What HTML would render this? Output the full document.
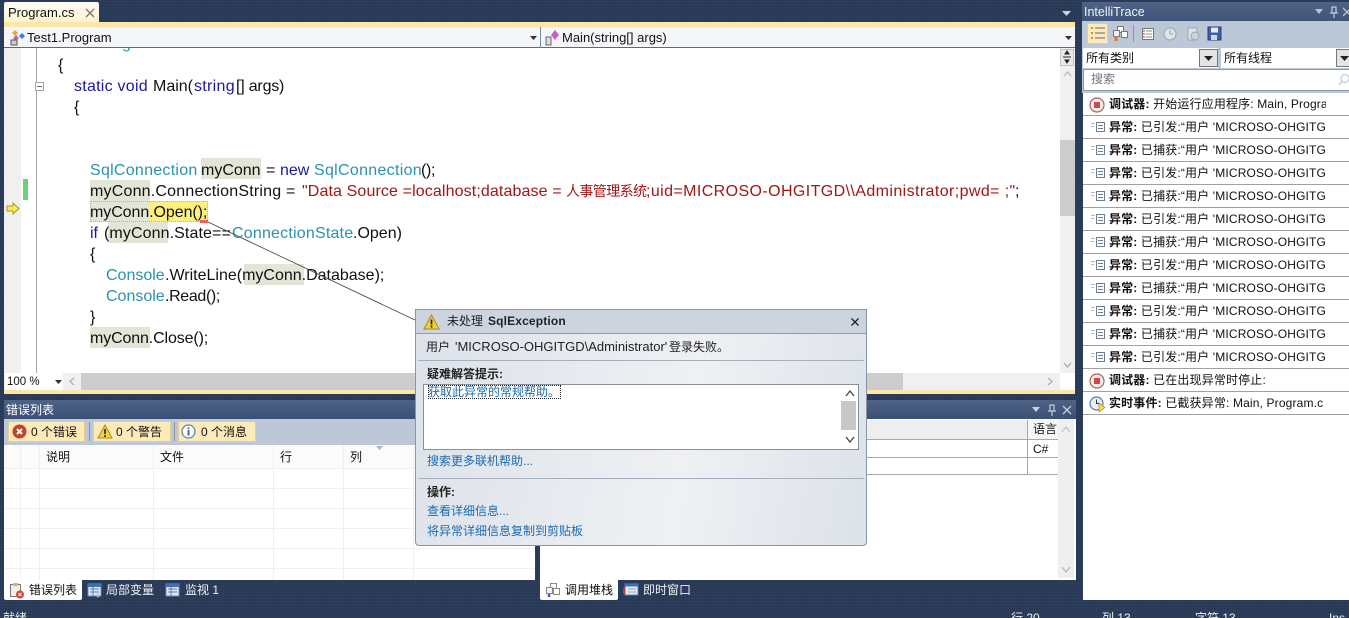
<!DOCTYPE html>
<html><head><meta charset="utf-8">
<style>
html,body{margin:0;padding:0;width:1349px;height:618px;overflow:hidden}
body{position:relative;background:#293955;font-family:"Liberation Sans","Noto Sans CJK SC",sans-serif;font-size:12px;color:#111}
div,svg{position:absolute}
#root{left:0;top:0;width:1349px;height:618px;overflow:hidden;background:#293955}
.t{white-space:nowrap;line-height:16px}
.c{font-size:16px;line-height:21px;white-space:nowrap;position:absolute;color:#111}
.k{color:#1a1a9c}.y{color:#2b91af}.s{color:#a31515}
.h{background:#e2e6d6;height:21px}
.dot{background-image:radial-gradient(#2f4160 40%,transparent 45%);background-size:3px 3px}
.r{left:1083px;width:266px;height:22px;border-bottom:1px solid #a0a0a0;background:#fff}
.r b{font-weight:bold}
.r .t{left:26px;top:3px;width:217px;overflow:hidden;letter-spacing:.15px}
.l{color:#1c6cb0}
</style></head><body>
<div id="root">
<div class="dot" style="left:0;top:0;width:1349px;height:618px"></div>

<!-- tab -->
<div style="left:4px;top:2px;width:95px;height:20px;background:linear-gradient(#fdfdf8,#fff3cd);border-radius:2px 2px 0 0"></div>
<div class="t" style="left:8px;top:5px;font-size:13px">Program.cs</div>
<svg style="left:84px;top:7px" width="12" height="12" viewBox="0 0 12 12"><path d="M2 2l8 8M10 2l-8 8" stroke="#777" stroke-width="1.4"/></svg>
<svg style="left:1062px;top:11px" width="10" height="6"><path d="M0 0h9L4.500 5z" fill="#ced4df"/></svg>
<div style="left:4px;top:22px;width:1071px;height:5px;background:#fde6a8"></div>

<!-- nav bar -->
<div style="left:4px;top:27px;width:1071px;height:21px;background:#f4f6fa"></div>
<div style="left:4px;top:47px;width:1071px;height:1px;background:#5b6a80"></div>
<div style="left:540px;top:27px;width:1px;height:21px;background:#7d8ba0"></div>
<svg style="left:9px;top:29px" width="17" height="17" viewBox="0 0 17 17"><path d="M6 1l3 3-3 3-3-3z" fill="#e0a93a"/><path d="M13 4l3 3-3 3-3-3z" fill="#3d7fd0"/><path d="M7 6l3 3-3 3-3-3z" fill="#c460c8"/><rect x="2" y="11" width="6" height="5" fill="#ccc" stroke="#555"/></svg>
<div class="t" style="left:27px;top:30px;font-size:13px">Test1.Program</div>
<svg style="left:530px;top:36px" width="8" height="4"><path d="M0 0h7L3.500 4z" fill="#333"/></svg>
<svg style="left:544px;top:29px" width="18" height="17" viewBox="0 0 18 17"><rect x="2" y="8" width="5" height="8" fill="#ddd" stroke="#667"/><path d="M11 1l4 5-4 5-4-5z" fill="#c75fd0"/></svg>
<div class="t" style="left:562px;top:30px;font-size:13px">Main(string[] args)</div>
<svg style="left:1065px;top:36px" width="8" height="4"><path d="M0 0h7L3.500 4z" fill="#333"/></svg>

<!-- editor -->
<div style="left:4px;top:48px;width:1071px;height:325px;background:#fff;overflow:hidden">
  <div style="left:0;top:0;width:17px;height:325px;background:#f0f0f0"></div>
  <div style="left:32px;top:0;width:1px;height:325px;background:#a5a5a5"></div>
  <div style="left:31px;top:34px;width:7px;height:7px;border:1px solid #a5a5a5;background:#fff"></div>
  <div style="left:33px;top:38px;width:5px;height:1px;background:#666"></div>
  <div style="left:19px;top:131px;width:5px;height:21px;background:#6cd275"></div>
  <div class="c y" style="left:118px;top:-15px">g</div>
</div>
<svg style="left:6px;top:202px" width="14" height="13" viewBox="0 0 14 13"><path d="M1 4h6V1l6 5.500-6 5.500V9H1z" fill="#f5ec5a" stroke="#a89a20"/></svg>

<div class="h" style="left:201px;top:158px;width:60px"></div>
<div class="h" style="left:90px;top:180px;width:60px"></div>
<div class="h" style="left:90px;top:201px;width:60px"></div>
<div style="left:150px;top:201px;width:58px;height:21px;background:#ffef7f"></div>
<div style="left:90px;top:201px;width:118px;height:21px;box-sizing:border-box;border:1px dotted #b9b48c"></div>
<div class="h" style="left:108px;top:222px;width:60px"></div>
<div class="h" style="left:244px;top:264px;width:60px"></div>
<div class="h" style="left:90px;top:327px;width:60px"></div>
<div style="left:200px;top:220px;width:8px;height:3px;background:#f0605a"></div>

<span class="c" style="left:58px;top:55px">{</span>
<span class="c k" style="left:74px;top:76px;letter-spacing:.25px">static void</span>
<span class="c" style="left:153px;top:76px">Main(</span>
<span class="c k" style="left:194px;top:76px;letter-spacing:.3px">string</span>
<span class="c" style="left:236px;top:76px;letter-spacing:-.2px">[] args)</span>
<span class="c" style="left:74px;top:97px">{</span>

<span class="c y" style="left:90px;top:160px;letter-spacing:.27px">SqlConnection</span>
<span class="c" style="left:201px;top:160px">myConn</span>
<span class="c" style="left:266px;top:160px">=</span>
<span class="c k" style="left:280px;top:160px">new</span>
<span class="c y" style="left:314px;top:160px;letter-spacing:.3px">SqlConnection</span>
<span class="c" style="left:421px;top:160px;letter-spacing:-.3px">();</span>

<span class="c" style="left:90px;top:181px;letter-spacing:.2px">myConn.ConnectionString =</span>
<span class="c s" style="left:302px;top:181px;letter-spacing:.12px">"Data Source =localhost;database =</span>
<span class="c s" style="left:566px;top:181px;font-size:14px;letter-spacing:-.6px">人事管理系统</span>
<span class="c s" style="left:646px;top:181px;letter-spacing:.4px">;uid=MICROSO-OHGITGD\\Administrator;pwd= ;"</span>
<span class="c" style="left:1015px;top:181px">;</span>

<span class="c" style="left:90px;top:202px;letter-spacing:-.07px">myConn.Open();</span>
<span class="c k" style="left:90px;top:223px">if</span>
<span class="c" style="left:104px;top:223px;letter-spacing:.1px">(myConn.State==</span>
<span class="c y" style="left:232px;top:223px;letter-spacing:.2px">ConnectionState</span>
<span class="c" style="left:353px;top:223px">.Open)</span>
<span class="c" style="left:90px;top:244px">{</span>
<span class="c y" style="left:106px;top:265px">Console</span>
<span class="c" style="left:165px;top:265px">.WriteLine(myConn.Database);</span>
<span class="c y" style="left:106px;top:286px">Console</span>
<span class="c" style="left:165px;top:286px;letter-spacing:-.35px">.Read();</span>
<span class="c" style="left:90px;top:307px">}</span>
<span class="c" style="left:90px;top:328px;letter-spacing:-.13px">myConn.Close();</span>

<svg style="left:205px;top:220px" width="215" height="104"><path d="M3 2L210 100" stroke="#444" stroke-width=".8" fill="none"/></svg>

<!-- editor scrollbars -->
<div style="left:1060px;top:48px;width:15px;height:325px;background:#f0f0f0"></div>
<div style="left:1060px;top:49px;width:14px;height:17px;background:#e8e8e8;border:1px solid #c4c4c4;box-sizing:border-box"></div>
<svg style="left:1062px;top:50px" width="10" height="14"><path d="M1 7h8M5 1L3 4h4zM5 13l-2-3h4z" stroke="#222" fill="#222"/></svg>
<svg style="left:1063px;top:71px" width="9" height="6"><path d="M1 5l3.500-4L8 5" stroke="#c0c0c0" fill="none" stroke-width="1.400"/></svg>
<div style="left:1060px;top:140px;width:15px;height:76px;background:#cdcdcd"></div>
<svg style="left:1063px;top:362px" width="9" height="6"><path d="M1 1l3.500 4L8 1" stroke="#b0b0b0" fill="none" stroke-width="1.400"/></svg>

<div style="left:4px;top:373px;width:1071px;height:17px;background:#f0f0f0"></div>
<div style="left:5px;top:373px;width:58px;height:17px;background:#fff"></div>
<div class="t" style="left:7px;top:374px;font-size:11.500px">100 %</div>
<svg style="left:55px;top:380px" width="7" height="4"><path d="M0 0h7L3.500 4z" fill="#333"/></svg>
<svg style="left:69px;top:377px" width="6" height="9"><path d="M5 1L1 4.500 5 8" stroke="#b0b0b0" fill="none" stroke-width="1.300"/></svg>
<div style="left:81px;top:373px;width:822px;height:17px;background:#cdcdcd"></div>
<svg style="left:1047px;top:377px" width="6" height="9"><path d="M1 1l4 3.500L1 8" stroke="#b0b0b0" fill="none" stroke-width="1.300"/></svg>
<div style="left:1060px;top:373px;width:15px;height:17px;background:#fff"></div>
<div style="left:4px;top:390px;width:1071px;height:4px;background:#fde6a8"></div>

<!-- error list panel -->
<div style="left:4px;top:400px;width:531px;height:19px;background:linear-gradient(#4f6386,#3b5076)"></div>
<div class="t" style="left:6px;top:402px;font-size:12px;color:#fff">错误列表</div>
<div style="left:4px;top:419px;width:531px;height:26px;background:#bcc7d8"></div>
<div style="left:8px;top:421px;width:77px;height:21px;background:#fdeab9;border:1px solid #e8cf8f;box-sizing:border-box"></div>
<div style="left:93px;top:421px;width:78px;height:21px;background:#fdeab9;border:1px solid #e8cf8f;box-sizing:border-box"></div>
<div style="left:178px;top:421px;width:78px;height:21px;background:#fdeab9;border:1px solid #e8cf8f;box-sizing:border-box"></div>
<div style="left:89px;top:422px;width:1px;height:19px;background:#8996ab"></div>
<div style="left:174px;top:422px;width:1px;height:19px;background:#8996ab"></div>
<svg style="left:12px;top:424px" width="15" height="15" viewBox="0 0 15 15"><circle cx="7.500" cy="7.500" r="7" fill="#c0432c"/><path d="M5 5l5 5M10 5l-5 5" stroke="#fff" stroke-width="2"/></svg>
<svg style="left:97px;top:424px" width="16" height="15" viewBox="0 0 16 15"><path d="M8 1l7 13H1z" fill="#f3d33c" stroke="#a98a1c"/><path d="M8 5v5M8 11v2" stroke="#222" stroke-width="1.600"/></svg>
<svg style="left:181px;top:424px" width="15" height="15" viewBox="0 0 15 15"><circle cx="7.500" cy="7.500" r="6.500" fill="#fff" stroke="#5f87b8" stroke-width="1.300"/><path d="M7.500 6v5.500M7.500 3.500v1.500" stroke="#2e5c9c" stroke-width="1.800"/></svg>
<div class="t" style="left:31px;top:424px">0 个错误</div>
<div class="t" style="left:116px;top:424px">0 个警告</div>
<div class="t" style="left:201px;top:424px">0 个消息</div>

<div style="left:4px;top:445px;width:531px;height:135px;background:#fff"></div>
<div style="left:4px;top:445px;width:531px;height:23px;background:#fbfbfb"></div>
<div style="left:4px;top:468px;width:531px;height:1px;background:#f0f0f0"></div>
<div style="left:4px;top:488px;width:531px;height:1px;background:#f0f0f0"></div>
<div style="left:4px;top:508px;width:531px;height:1px;background:#f0f0f0"></div>
<div style="left:4px;top:528px;width:531px;height:1px;background:#f0f0f0"></div>
<div style="left:4px;top:548px;width:531px;height:1px;background:#f0f0f0"></div>
<div style="left:4px;top:568px;width:531px;height:1px;background:#f0f0f0"></div>
<div style="left:20px;top:445px;width:1px;height:135px;background:#f0f0f0"></div>
<div style="left:39px;top:445px;width:1px;height:135px;background:#f0f0f0"></div>
<div style="left:153px;top:445px;width:1px;height:135px;background:#f0f0f0"></div>
<div style="left:273px;top:445px;width:1px;height:135px;background:#f0f0f0"></div>
<div style="left:343px;top:445px;width:1px;height:135px;background:#f0f0f0"></div>
<div style="left:413px;top:445px;width:1px;height:135px;background:#f0f0f0"></div>
<div class="t" style="left:46px;top:449px">说明</div>
<div class="t" style="left:160px;top:449px">文件</div>
<div class="t" style="left:280px;top:449px">行</div>
<div class="t" style="left:350px;top:449px">列</div>
<svg style="left:376px;top:446px" width="8" height="4"><path d="M0 0h7L3.500 4z" fill="#9fb8c8"/></svg>

<!-- bottom tabs left -->
<div style="left:4px;top:580px;width:78px;height:20px;background:#fff;border-radius:0 0 2px 2px"></div>
<svg style="left:9px;top:582px" width="16" height="17" viewBox="0 0 16 17"><rect x="1.500" y="2.500" width="10" height="12" fill="#f2efe4" stroke="#777"/><rect x="4" y="1" width="5" height="3" fill="#c9b878"/><circle cx="11" cy="12.500" r="4" fill="#d04a3a"/><path d="M9.500 11l3 3M12.500 11l-3 3" stroke="#fff"/></svg>
<div class="t" style="left:29px;top:582px">错误列表</div>
<svg style="left:87px;top:583px" width="15" height="15" viewBox="0 0 15 15"><rect x="1" y="1" width="13" height="12" fill="#dfe7f3" stroke="#6c8ab5"/><rect x="1" y="1" width="13" height="3" fill="#3f6fb5"/><path d="M3 6h9M3 9h9M6 4v9" stroke="#5f7da8"/><path d="M10 10l3 3-3 2z" fill="#d2a6d8"/></svg>
<div class="t" style="left:106px;top:582px;color:#eef1f6">局部变量</div>
<svg style="left:165px;top:583px" width="15" height="15" viewBox="0 0 15 15"><rect x="1" y="1" width="13" height="12" fill="#dfe7f3" stroke="#6c8ab5"/><rect x="1" y="1" width="13" height="3" fill="#3f6fb5"/><path d="M3 6h9M3 9h9M6 4v9" stroke="#5f7da8"/></svg>
<div class="t" style="left:185px;top:582px;color:#eef1f6">监视 1</div>

<!-- call stack panel -->
<div style="left:540px;top:400px;width:536px;height:19px;background:linear-gradient(#4f6386,#3b5076)"></div>
<svg style="left:1032px;top:407px" width="9" height="5"><path d="M0 0h8L4 5z" fill="#ccd4e0"/></svg>
<svg style="left:1047px;top:404px" width="10" height="12"><path d="M3 1h4v6H3zM1 7h8M5 7v5" stroke="#dde3ec" fill="none"/></svg>
<svg style="left:1062px;top:405px" width="10" height="10"><path d="M1 1l8 8M9 1L1 9" stroke="#c4ccd9" stroke-width="1.300"/></svg>
<div style="left:540px;top:419px;width:536px;height:161px;background:#fff"></div>
<div style="left:540px;top:420px;width:488px;height:19px;background:#efefef"></div>
<div style="left:1028px;top:420px;width:30px;height:19px;background:#f6f6f6"></div>
<div style="left:540px;top:439px;width:518px;height:1px;background:#a8a8a8"></div>
<div style="left:540px;top:457px;width:518px;height:1px;background:#a8a8a8"></div>
<div style="left:540px;top:474px;width:518px;height:1px;background:#a8a8a8"></div>
<div style="left:1027px;top:420px;width:1px;height:54px;background:#a8a8a8"></div>
<div class="t" style="left:1033px;top:421px">语言</div>
<div class="t" style="left:1033px;top:441px">C#</div>
<div style="left:1058px;top:419px;width:16px;height:159px;background:#efefef"></div>
<svg style="left:1061px;top:426px" width="10" height="7"><path d="M1 6l4-5 4 5" stroke="#c4c4c4" fill="none" stroke-width="1.300"/></svg>
<svg style="left:1061px;top:566px" width="10" height="7"><path d="M1 1l4 5 4-5" stroke="#b8b8b8" fill="none" stroke-width="1.300"/></svg>

<div style="left:540px;top:580px;width:78px;height:20px;background:#fff;border-radius:0 0 2px 2px"></div>
<svg style="left:545px;top:582px" width="16" height="16" viewBox="0 0 16 16"><rect x="5.500" y="1.500" width="6" height="6" fill="#fff" stroke="#888"/><rect x="1.500" y="5.500" width="6" height="6" fill="#eef" stroke="#888"/><rect x="8.500" y="6.500" width="6" height="6" fill="#fff" stroke="#888"/><path d="M4 12v3" stroke="#2b66b8" stroke-width="2.500"/></svg>
<div class="t" style="left:565px;top:582px">调用堆栈</div>
<svg style="left:623px;top:583px" width="16" height="15" viewBox="0 0 16 15"><rect x="2" y="1" width="13" height="11" fill="#e6edf7" stroke="#5a7fb5"/><rect x="2" y="1" width="13" height="2.500" fill="#3f6fb5"/><path d="M1 5v6" stroke="#c8342c" stroke-width="2"/><path d="M5 6h8M5 9h8" stroke="#8aa"/></svg>
<div class="t" style="left:643px;top:582px;color:#eef1f6">即时窗口</div>

<!-- status -->
<div style="left:3px;top:610px;color:#eef1f6" class="t">就绪</div>
<div style="left:1011px;top:610px;color:#eef1f6" class="t">行 20</div>
<div style="left:1102px;top:610px;color:#eef1f6" class="t">列 13</div>
<div style="left:1195px;top:610px;color:#eef1f6" class="t">字符 13</div>
<div style="left:1329px;top:610px;color:#eef1f6" class="t">Ins</div>

<!-- IntelliTrace -->
<div style="left:1082px;top:2px;width:267px;height:19px;background:linear-gradient(#4f6386,#3f5479)"></div>
<div class="t" style="left:1084px;top:4px;color:#f0f3f8;font-size:12.500px">IntelliTrace</div>
<svg style="left:1315px;top:9px" width="8" height="5"><path d="M0 0h8L4 5z" fill="#b8c2d2"/></svg>
<svg style="left:1329px;top:6px" width="10" height="12"><path d="M3 1h4v6H3zM1 7h8M5 7v5" stroke="#dde3ec" fill="none"/></svg>
<svg style="left:1343px;top:7px" width="6" height="10"><path d="M0 1l8 8M8 1L0 9" stroke="#c4ccd9" stroke-width="1.300"/></svg>
<div style="left:1082px;top:21px;width:267px;height:72px;background:#bcc7d8"></div>
<div style="left:1087px;top:23px;width:21px;height:21px;background:#fdeab9;border:1px solid #e8cf8f;box-sizing:border-box"></div>
<svg style="left:1089px;top:25px" width="17" height="17" viewBox="0 0 17 17"><path d="M6 3h10M6 8h10M6 13h10" stroke="#5a6a85"/><path d="M2 2h2v2H2zM2 7h2v2H2zM2 12h2v2H2z" fill="#c79a2a"/></svg>
<svg style="left:1111px;top:25px" width="18" height="17" viewBox="0 0 18 17"><rect x="6.500" y="1.500" width="6" height="6" fill="#fff" stroke="#777"/><rect x="2.500" y="5.500" width="6" height="6" fill="#eef" stroke="#777"/><rect x="10.500" y="6.500" width="6" height="6" fill="#fff" stroke="#777"/><path d="M5 11v5" stroke="#d47a2a" stroke-width="3"/></svg>
<div style="left:1133px;top:25px;width:1px;height:17px;background:#8996ab"></div>
<svg style="left:1140px;top:26px" width="16" height="16" viewBox="0 0 16 16"><rect x="2.500" y="2.500" width="11" height="11" fill="#fff" stroke="#777"/><path d="M6 5h6M6 8h6M6 11h6" stroke="#888"/><path d="M3 5h2M3 8h2M3 11h2" stroke="#c8342c"/></svg>
<svg style="left:1162px;top:26px" width="16" height="16" viewBox="0 0 16 16"><circle cx="8" cy="8" r="6" fill="#dfe3ea" stroke="#9aa3b0"/><path d="M8 4v4h3" stroke="#9aa3b0" fill="none"/></svg>
<svg style="left:1185px;top:26px" width="16" height="16" viewBox="0 0 16 16"><rect x="3" y="2" width="9" height="12" fill="#dfe3ea" stroke="#9aa3b0"/><circle cx="10" cy="10" r="4" fill="#cfd4dc" stroke="#9aa3b0"/></svg>
<svg style="left:1207px;top:26px" width="15" height="15" viewBox="0 0 15 15"><rect x="1" y="1" width="13" height="13" fill="#3f5fa8" stroke="#2a3f78"/><rect x="4" y="1.500" width="7" height="5" fill="#e6ecf5"/><rect x="4" y="9" width="6" height="5" fill="#cfd6e2"/></svg>

<div style="left:1083px;top:48px;width:135px;height:20px;background:#fff"></div>
<div class="t" style="left:1086px;top:50px">所有类别</div>
<div style="left:1199px;top:49px;width:19px;height:18px;background:#e4e4e4;border:1px solid #777;box-sizing:border-box"></div>
<svg style="left:1204px;top:56px" width="9" height="5"><path d="M0 0h9L4.500 5z" fill="#222"/></svg>
<div style="left:1221px;top:48px;width:128px;height:20px;background:#fff"></div>
<div class="t" style="left:1224px;top:50px">所有线程</div>
<div style="left:1336px;top:49px;width:13px;height:18px;background:#e4e4e4;border:1px solid #777;border-right:0;box-sizing:border-box"></div>
<svg style="left:1340px;top:56px" width="9" height="5"><path d="M0 0h9L4.500 5z" fill="#222"/></svg>
<div style="left:1083px;top:69px;width:266px;height:22px;background:#fff;border:1px solid #8d99ad;border-right:0;box-sizing:border-box"></div>
<div class="t" style="left:1091px;top:71px;color:#777">搜索</div>
<svg style="left:1338px;top:73px" width="11" height="14"><circle cx="7" cy="5.500" r="4" fill="none" stroke="#c4cedb" stroke-width="1.300"/><path d="M4 8l-3 4" stroke="#c4cedb" stroke-width="1.500"/></svg>
<div style="left:1083px;top:93px;width:266px;height:507px;background:#fff"></div>

<div class="r" style="top:93px"><div class="t"><b>调试器:</b> 开始运行应用程序: Main, Progra</div></div>
<div class="r" style="top:116px"><div class="t"><b>异常:</b> 已引发:“用户 'MICROSO-OHGITG</div></div>
<div class="r" style="top:139px"><div class="t"><b>异常:</b> 已捕获:“用户 'MICROSO-OHGITG</div></div>
<div class="r" style="top:162px"><div class="t"><b>异常:</b> 已引发:“用户 'MICROSO-OHGITG</div></div>
<div class="r" style="top:185px"><div class="t"><b>异常:</b> 已捕获:“用户 'MICROSO-OHGITG</div></div>
<div class="r" style="top:208px"><div class="t"><b>异常:</b> 已引发:“用户 'MICROSO-OHGITG</div></div>
<div class="r" style="top:231px"><div class="t"><b>异常:</b> 已捕获:“用户 'MICROSO-OHGITG</div></div>
<div class="r" style="top:254px"><div class="t"><b>异常:</b> 已引发:“用户 'MICROSO-OHGITG</div></div>
<div class="r" style="top:277px"><div class="t"><b>异常:</b> 已捕获:“用户 'MICROSO-OHGITG</div></div>
<div class="r" style="top:300px"><div class="t"><b>异常:</b> 已引发:“用户 'MICROSO-OHGITG</div></div>
<div class="r" style="top:323px"><div class="t"><b>异常:</b> 已捕获:“用户 'MICROSO-OHGITG</div></div>
<div class="r" style="top:346px"><div class="t"><b>异常:</b> 已引发:“用户 'MICROSO-OHGITG</div></div>
<div class="r" style="top:369px"><div class="t"><b>调试器:</b> 已在出现异常时停止:</div></div>
<div class="r" style="top:392px"><div class="t"><b>实时事件:</b> 已截获异常: Main, Program.c</div></div>

<svg style="left:1089px;top:97px" width="16" height="16" viewBox="0 0 16 16"><circle cx="8" cy="8" r="7" fill="#f5efec" stroke="#b0605a" stroke-width="1.200"/><rect x="5" y="5" width="6" height="6" fill="#d8444c"/></svg>
<svg style="left:1089px;top:373px" width="16" height="16" viewBox="0 0 16 16"><circle cx="8" cy="8" r="7" fill="#f5efec" stroke="#b0605a" stroke-width="1.200"/><rect x="5" y="5" width="6" height="6" fill="#d8444c"/></svg>
<svg style="left:1089px;top:396px" width="17" height="17" viewBox="0 0 17 17"><circle cx="7.500" cy="7.500" r="6.500" fill="#e8edf5" stroke="#5f7da8" stroke-width="1.200"/><path d="M7.500 3.500v4h3" stroke="#333" fill="none"/><path d="M10 7l6 4.500-6 4.500z" fill="#f5dc3a" stroke="#a08a1a" stroke-width=".6"/></svg>

<svg style="left:1091px;top:122px" width="14" height="10" viewBox="0 0 14 10"><path d="M0 1.500h4M0 4.500h3" stroke="#b8b8b8"/><rect x="5.500" y=".5" width="8" height="9" fill="#fff" stroke="#6d7f95"/><path d="M7 3.500h5M7 6.500h5" stroke="#6d7f95"/></svg>
<svg style="left:1091px;top:145px" width="14" height="10" viewBox="0 0 14 10"><path d="M0 1.500h4M0 4.500h3" stroke="#b8b8b8"/><rect x="5.500" y=".5" width="8" height="9" fill="#fff" stroke="#6d7f95"/><path d="M7 3.500h5M7 6.500h5" stroke="#6d7f95"/></svg>
<svg style="left:1091px;top:168px" width="14" height="10" viewBox="0 0 14 10"><path d="M0 1.500h4M0 4.500h3" stroke="#b8b8b8"/><rect x="5.500" y=".5" width="8" height="9" fill="#fff" stroke="#6d7f95"/><path d="M7 3.500h5M7 6.500h5" stroke="#6d7f95"/></svg>
<svg style="left:1091px;top:191px" width="14" height="10" viewBox="0 0 14 10"><path d="M0 1.500h4M0 4.500h3" stroke="#b8b8b8"/><rect x="5.500" y=".5" width="8" height="9" fill="#fff" stroke="#6d7f95"/><path d="M7 3.500h5M7 6.500h5" stroke="#6d7f95"/></svg>
<svg style="left:1091px;top:214px" width="14" height="10" viewBox="0 0 14 10"><path d="M0 1.500h4M0 4.500h3" stroke="#b8b8b8"/><rect x="5.500" y=".5" width="8" height="9" fill="#fff" stroke="#6d7f95"/><path d="M7 3.500h5M7 6.500h5" stroke="#6d7f95"/></svg>
<svg style="left:1091px;top:237px" width="14" height="10" viewBox="0 0 14 10"><path d="M0 1.500h4M0 4.500h3" stroke="#b8b8b8"/><rect x="5.500" y=".5" width="8" height="9" fill="#fff" stroke="#6d7f95"/><path d="M7 3.500h5M7 6.500h5" stroke="#6d7f95"/></svg>
<svg style="left:1091px;top:260px" width="14" height="10" viewBox="0 0 14 10"><path d="M0 1.500h4M0 4.500h3" stroke="#b8b8b8"/><rect x="5.500" y=".5" width="8" height="9" fill="#fff" stroke="#6d7f95"/><path d="M7 3.500h5M7 6.500h5" stroke="#6d7f95"/></svg>
<svg style="left:1091px;top:283px" width="14" height="10" viewBox="0 0 14 10"><path d="M0 1.500h4M0 4.500h3" stroke="#b8b8b8"/><rect x="5.500" y=".5" width="8" height="9" fill="#fff" stroke="#6d7f95"/><path d="M7 3.500h5M7 6.500h5" stroke="#6d7f95"/></svg>
<svg style="left:1091px;top:306px" width="14" height="10" viewBox="0 0 14 10"><path d="M0 1.500h4M0 4.500h3" stroke="#b8b8b8"/><rect x="5.500" y=".5" width="8" height="9" fill="#fff" stroke="#6d7f95"/><path d="M7 3.500h5M7 6.500h5" stroke="#6d7f95"/></svg>
<svg style="left:1091px;top:329px" width="14" height="10" viewBox="0 0 14 10"><path d="M0 1.500h4M0 4.500h3" stroke="#b8b8b8"/><rect x="5.500" y=".5" width="8" height="9" fill="#fff" stroke="#6d7f95"/><path d="M7 3.500h5M7 6.500h5" stroke="#6d7f95"/></svg>
<svg style="left:1091px;top:352px" width="14" height="10" viewBox="0 0 14 10"><path d="M0 1.500h4M0 4.500h3" stroke="#b8b8b8"/><rect x="5.500" y=".5" width="8" height="9" fill="#fff" stroke="#6d7f95"/><path d="M7 3.500h5M7 6.500h5" stroke="#6d7f95"/></svg>

<!-- exception dialog -->
<div style="left:415px;top:309px;width:452px;height:237px;box-sizing:border-box;border:1px solid #8a94a6;border-radius:0 0 4px 4px;background:linear-gradient(100deg,#dde2ea,#eef0f3 60%,#dde2ea);overflow:hidden">
  <div style="left:0;top:0;width:450px;height:23px;background:#ccd4e0;border-bottom:1px solid #8f9bb0"></div>
  <div style="left:2px;top:50px;width:446px;height:1px;background:#a5afbd"></div>
  <div style="left:2px;top:168px;width:446px;height:1px;background:#a5afbd"></div>
</div>
<svg style="left:423px;top:314px" width="17" height="16" viewBox="0 0 17 16"><path d="M8.500 1l7.500 14H1z" fill="#f2cf3a" stroke="#a98a1c"/><path d="M8.500 5.500v5M8.500 11.500v2" stroke="#222" stroke-width="1.700"/></svg>
<div class="t" style="left:447px;top:313px;color:#222">未处理</div>
<div class="t" style="left:488px;top:313px;color:#222;font-weight:bold;letter-spacing:.15px">SqlException</div>
<svg style="left:851px;top:318px" width="8" height="8"><path d="M.5.5l7 7M7.500.5l-7 7" stroke="#222" stroke-width="1.300"/></svg>
<div class="t" style="left:426px;top:339px;color:#222">用户</div>
<div class="t" style="left:455px;top:339px;color:#222;font-size:13px">'MICROSO-OHGITGD\Administrator'</div>
<div class="t" style="left:669px;top:339px;color:#222">登录失败。</div>
<div class="t" style="left:427px;top:366px;font-weight:bold;color:#222">疑难解答提示:</div>
<div style="left:423px;top:384px;width:436px;height:66px;box-sizing:border-box;background:#fff;border:1px solid #8b8f96"></div>
<div class="t l" style="left:428px;top:385px;outline:1px dotted #222;outline-offset:-1px;height:14px;line-height:14px;padding-right:1px">获取此异常的常规帮助。</div>
<svg style="left:845px;top:390px" width="10" height="7"><path d="M1 6l4-5 4 5" stroke="#444" fill="none" stroke-width="1.300"/></svg>
<div style="left:841px;top:401px;width:15px;height:29px;background:#c8c8c8"></div>
<svg style="left:845px;top:436px" width="10" height="7"><path d="M1 1l4 5 4-5" stroke="#444" fill="none" stroke-width="1.300"/></svg>
<div class="t l" style="left:427px;top:453px">搜索更多联机帮助...</div>
<div class="t" style="left:427px;top:484px;font-weight:bold;color:#222">操作:</div>
<div class="t l" style="left:427px;top:503px">查看详细信息...</div>
<div class="t l" style="left:427px;top:523px">将异常详细信息复制到剪贴板</div>
</div>
</body></html>
